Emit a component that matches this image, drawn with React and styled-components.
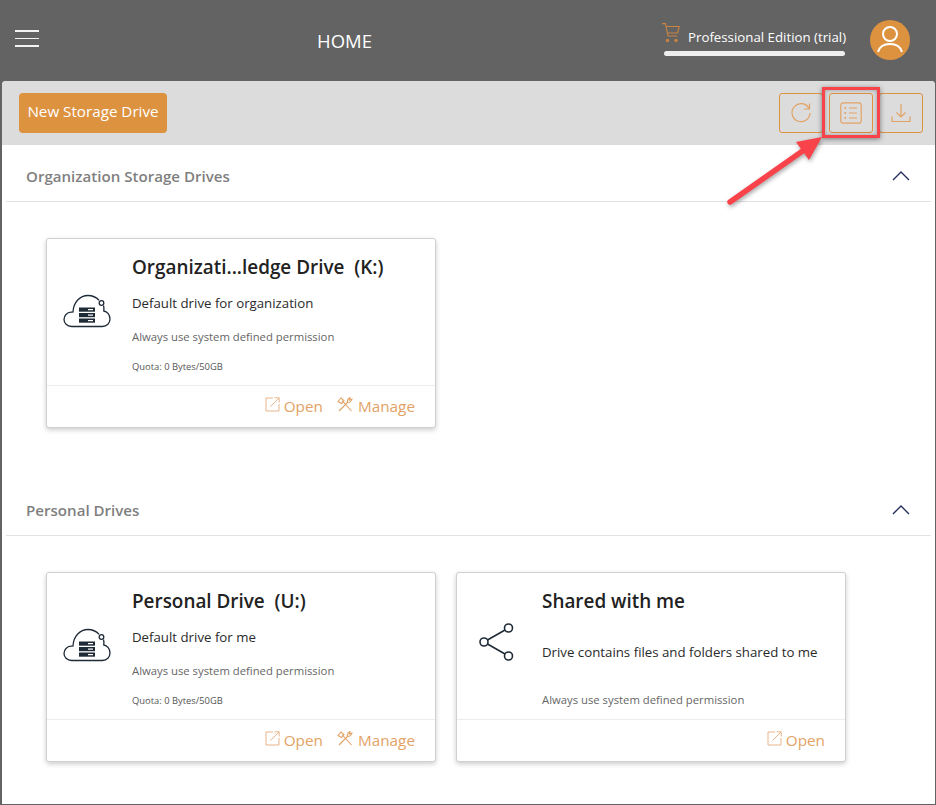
import React from 'react'
import styled, { createGlobalStyle } from 'styled-components'

const orange = '#dd9240'

const GlobalStyle = createGlobalStyle`
  html, body {
    margin: 0;
    padding: 0;
    background: #636363;
  }
  body {
    font-family: "Open Sans", "Noto Sans", sans-serif;
  }
`

const Page = styled.div`
  position: relative;
  width: 936px;
  height: 805px;
  overflow: hidden;
  display: flex;
  flex-direction: column;
`

const Header = styled.header`
  height: 81px;
  flex: none;
  display: grid;
  grid-template-columns: 660px 1fr;
  color: #fff;
`

const HeaderLeft = styled.div`
  display: flex;
  align-items: center;
  padding-left: 15px;
`

const Burger = styled.div`
  width: 24px;
  display: flex;
  flex-direction: column;
  gap: 6px;
  margin-top: -4px;
  span {
    height: 1.5px;
    background: #f2f2f2;
    display: block;
  }
`

const Title = styled.div`
  margin-left: 278px;
  font-size: 18.5px;
  margin-top: -1px;
`

const HeaderRight = styled.div`
  display: flex;
  align-items: center;
  justify-content: space-between;
  padding: 0 26px 2px 0;
`

const Edition = styled.div`
  display: flex;
  flex-direction: column;
  margin-top: 0;
`

const EditionRow = styled.div`
  display: flex;
  align-items: flex-start;
  gap: 8px;
  padding-left: 2px;
`

const EditionName = styled.span`
  font-size: 13.27px;
  line-height: 18px;
  margin-top: 5px;
  white-space: nowrap;
`

const EditionBar = styled.div`
  margin: 5px 0 0 4px;
  width: 181px;
  height: 5px;
  border-radius: 3px;
  background: #eeeeee;
`

const Avatar = styled.div`
  width: 40px;
  height: 40px;
  border-radius: 50%;
  background: ${orange};
  display: flex;
  align-items: center;
  justify-content: center;
`

const Panel = styled.main`
  flex: 1;
  margin: 0 1px 1px 2px;
  background: #fff;
  border-radius: 4px 4px 0 0;
  overflow: hidden;
`

const Toolbar = styled.div`
  height: 64px;
  background: #dcdcdc;
  display: flex;
  align-items: center;
  justify-content: space-between;
  padding: 0 12px 0 17px;
`

const PrimaryButton = styled.button`
  height: 40px;
  width: 148px;
  padding: 0 0 4px;
  border: 0;
  border-radius: 4px;
  background: ${orange};
  color: #fff;
  font: inherit;
  font-size: 15.2px;
`

const ToolGroup = styled.div`
  display: flex;
`

const ToolButton = styled.div`
  width: 44px;
  height: 40px;
  margin-left: ${(p) => (p.$first ? '0' : '6px')};
  box-sizing: border-box;
  border: 1px solid ${orange};
  border-radius: 3px;
  display: flex;
  align-items: center;
  justify-content: center;
`

const SectionHead = styled.div`
  height: 57px;
  margin: ${(p) => p.$gap || 0}px 4px 0;
  box-sizing: border-box;
  border-bottom: 1px solid #e2e2e2;
  display: flex;
  align-items: center;
  justify-content: space-between;
  padding: 6px 21px 0 20px;
`

const SectionTitle = styled.h2`
  margin: 0;
  font-size: 15.1px;
  font-weight: 600;
  color: #7f7f7f;
`

const CardRow = styled.div`
  display: flex;
  gap: 20px;
  padding: 36px 0 0 44px;
`

const Card = styled.div`
  width: 390px;
  height: 190px;
  box-sizing: border-box;
  background: #fff;
  border: 1px solid #d0d0d0;
  border-radius: 3px;
  box-shadow: 0 2px 5px rgba(0, 0, 0, 0.2);
  display: flex;
  flex-direction: column;
`

const CardBody = styled.div`
  flex: 1;
  display: grid;
  grid-template-columns: 85px 1fr;
  min-height: 0;
`

const CardIcon = styled.div`
  display: flex;
  align-items: flex-start;
  padding: ${(p) => p.$top}px 0 0 ${(p) => p.$left}px;
`

const CardText = styled.div`
  display: flex;
  flex-direction: column;
  color: #222;
  padding-top: 15px;
`

const CardTitle = styled.div`
  font-size: 18.9px;
  font-weight: 600;
  line-height: 26px;
  color: #222;
  white-space: pre;
`

const CardDesc = styled.div`
  font-size: 13.25px;
  line-height: 18px;
  margin-top: ${(p) => p.$mt}px;
  color: #2a2a2a;
  white-space: nowrap;
`

const CardPerm = styled.div`
  font-size: 11.3px;
  line-height: 16px;
  margin-top: ${(p) => p.$mt}px;
  color: #666;
  white-space: nowrap;
`

const CardQuota = styled.div`
  font-size: 9.4px;
  line-height: 12px;
  margin-top: 16px;
  color: #555;
`

const CardFooter = styled.div`
  height: 41px;
  flex: none;
  box-sizing: content-box;
  border-top: 1px solid #ececec;
  display: flex;
  align-items: center;
  justify-content: flex-end;
  gap: 14px;
  padding-right: 20px;
`

const FooterLink = styled.span`
  display: inline-flex;
  align-items: center;
  gap: ${(p) => p.$gap || 4}px;
  margin-top: -2px;
  color: #e2a265;
  font-size: 15.3px;
  svg {
    margin-top: -2px;
  }
`

const Highlight = styled.div`
  position: absolute;
  left: 822px;
  top: 87px;
  width: 58px;
  height: 51px;
  box-sizing: border-box;
  border: 3.5px solid #f8434a;
  box-shadow: 0 1px 5px rgba(0, 0, 0, 0.45), inset 0 0 4px rgba(0, 0, 0, 0.3);
`

const Arrow = styled.svg`
  position: absolute;
  left: 720px;
  top: 130px;
  filter: drop-shadow(1px 2px 2px rgba(0, 0, 0, 0.35));
`

const CartIcon = () => (
  <svg width="18" height="20" viewBox="0 0 18 20" fill="none" stroke="#c98342" strokeWidth="1.1">
    <path d="M0 .6h3.500l2.500 12.400h9.500" />
    <path d="M4.200 3.500h13l-1.600 6.500H5.500" />
    <circle cx="5.500" cy="17.500" r="1.200" fill="#c98342" />
    <circle cx="14" cy="17.500" r="1.200" fill="#c98342" />
  </svg>
)

const UserIcon = () => (
  <svg width="28" height="32" viewBox="0 0 28 32" fill="none" stroke="#fff" strokeWidth="2">
    <circle cx="14" cy="10" r="7" />
    <path d="M2 28c1.500-5.500 6-8 12-8s10.500 2.500 12 8" />
  </svg>
)

const RefreshIcon = () => (
  <svg width="22" height="22" viewBox="0 0 22 22" fill="none" stroke="#e2a265" strokeWidth="1.2">
    <path d="M19 6.500A9 9 0 1 0 20 11" />
    <path d="M19.500 1.500v5.500h-5.500" />
  </svg>
)

const ListIcon = () => (
  <svg width="22" height="22" viewBox="0 0 22 22" fill="none" stroke="#e2a265" strokeWidth="1.2">
    <rect x="0.800" y="0.800" width="20.400" height="20.400" rx="2.500" />
    <path d="M9 6h8M9 11h8M9 16h8" />
    <path d="M4.500 6h1.500M4.500 11h1.500M4.500 16h1.500" strokeWidth="1.800" />
  </svg>
)

const DownloadIcon = () => (
  <svg width="20" height="20" viewBox="0 0 20 20" fill="none" stroke="#e2a265" strokeWidth="1.2">
    <path d="M10 1v13M5.500 9.500L10 14l4.500-4.500" />
    <path d="M1 13.500v5h18v-5" />
  </svg>
)

const ChevronUp = () => (
  <svg width="18" height="10" viewBox="0 0 18 10" fill="none" stroke="#25305f" strokeWidth="1.400">
    <path d="M1 9l8-8 8 8" />
  </svg>
)

const CloudIcon = () => (
  <svg width="48" height="34" viewBox="0 0 48 34" fill="none" stroke="#1f2a37" strokeWidth="1.300">
    <path d="M11 32.500H8.500C4 32.500 1 29 1 25.500c0-4 3-7 7-7.300 .5 0 1.500 0 2-.2C10.500 8 17 1.500 25 1.500c4 0 8 1.500 11 4.800" />
    <circle cx="38.500" cy="9" r="2.300" />
    <path d="M40.500 11.500c.5 1.500 .5 3.500 .3 5.500 3.500 .5 6.200 4 6.200 8 0 4-3.200 7.500-7.500 7.500H11" />
    <g stroke="none" fill="#1f2a37">
      <rect x="16" y="13.500" width="16" height="4.200" />
      <rect x="16" y="19" width="16" height="4.200" />
      <rect x="16" y="24.500" width="16" height="4.200" />
    </g>
    <g stroke="none" fill="#fff">
      <rect x="25" y="15" width="5" height="1.200" />
      <rect x="25" y="20.500" width="5" height="1.200" />
      <rect x="25" y="26" width="5" height="1.200" />
    </g>
  </svg>
)

const ShareIcon = () => (
  <svg width="36" height="38" viewBox="0 0 36 38" fill="none" stroke="#1f2a37" strokeWidth="1.600">
    <circle cx="5" cy="19" r="4" />
    <circle cx="29.500" cy="5" r="4" />
    <circle cx="29.500" cy="33" r="4" />
    <path d="M8.500 17l17.500-10M8.500 21l17.500 10" />
  </svg>
)

const OpenIcon = () => (
  <svg width="15" height="15" viewBox="0 0 15 15" fill="none" stroke="#e8b58a" strokeWidth="1">
    <path d="M8 1H1v13h13V7" />
    <path d="M5.500 9.500L14 1M9.500 .8H14.200V5.500" />
  </svg>
)

const ToolsIcon = () => (
  <svg width="16" height="15" viewBox="0 0 16 15" fill="none" stroke="#e2a265" strokeWidth="1.100">
    <path d="M5 3.500l9.500 10.500" />
    <path d="M1 4.500L4 1l3 2.500-2.500 3z" />
    <path d="M10.500 5.500L2 14" />
    <path d="M15 2c-.3 2-2.500 3.500-4.500 3.500-.5-1.800 .5-4 2.500-5l-.5 2.500z" />
  </svg>
)

const Drive = ({ title, desc, quota, manage, shared }) => (
  <Card>
    <CardBody>
      {shared ? (
        <CardIcon $top={50} $left={22}>
          <ShareIcon />
        </CardIcon>
      ) : (
        <CardIcon $top={55} $left={16}>
          <CloudIcon />
        </CardIcon>
      )}
      <CardText>
        <CardTitle>{title}</CardTitle>
        <CardDesc $mt={shared ? 29 : 14}>{desc}</CardDesc>
        <CardPerm $mt={shared ? 31 : 17}>Always use system defined permission</CardPerm>
        {quota && <CardQuota>{quota}</CardQuota>}
      </CardText>
    </CardBody>
    <CardFooter>
      <FooterLink>
        <OpenIcon />
        Open
      </FooterLink>
      {manage && (
        <FooterLink $gap={5}>
          <ToolsIcon />
          Manage
        </FooterLink>
      )}
    </CardFooter>
  </Card>
)

export default function App() {
  return (
    <Page>
      <GlobalStyle />
      <Header>
        <HeaderLeft>
          <Burger>
            <span />
            <span />
            <span />
          </Burger>
          <Title>HOME</Title>
        </HeaderLeft>
        <HeaderRight>
          <Edition>
            <EditionRow>
              <CartIcon />
              <EditionName>Professional Edition (trial)</EditionName>
            </EditionRow>
            <EditionBar />
          </Edition>
          <Avatar>
            <UserIcon />
          </Avatar>
        </HeaderRight>
      </Header>
      <Panel>
        <Toolbar>
          <PrimaryButton>New Storage Drive</PrimaryButton>
          <ToolGroup>
            <ToolButton $first>
              <RefreshIcon />
            </ToolButton>
            <ToolButton>
              <ListIcon />
            </ToolButton>
            <ToolButton>
              <DownloadIcon />
            </ToolButton>
          </ToolGroup>
        </Toolbar>
        <SectionHead>
          <SectionTitle>Organization Storage Drives</SectionTitle>
          <ChevronUp />
        </SectionHead>
        <CardRow>
          <Drive
            title="Organizati...ledge Drive  (K:)"
            desc="Default drive for organization"
            quota="Quota: 0 Bytes/50GB"
            manage
          />
        </CardRow>
        <SectionHead $gap={51}>
          <SectionTitle>Personal Drives</SectionTitle>
          <ChevronUp />
        </SectionHead>
        <CardRow>
          <Drive
            title="Personal Drive  (U:)"
            desc="Default drive for me"
            quota="Quota: 0 Bytes/50GB"
            manage
          />
          <Drive title="Shared with me" desc="Drive contains files and folders shared to me" shared />
        </CardRow>
      </Panel>
      <Highlight />
      <Arrow width="110" height="85" viewBox="0 0 110 85">
        <path d="M10 72L84 20" stroke="#f8434a" strokeWidth="5.500" strokeLinecap="round" />
        <path d="M102 7L76 12L89 30Z" fill="#f8434a" />
      </Arrow>
    </Page>
  )
}
